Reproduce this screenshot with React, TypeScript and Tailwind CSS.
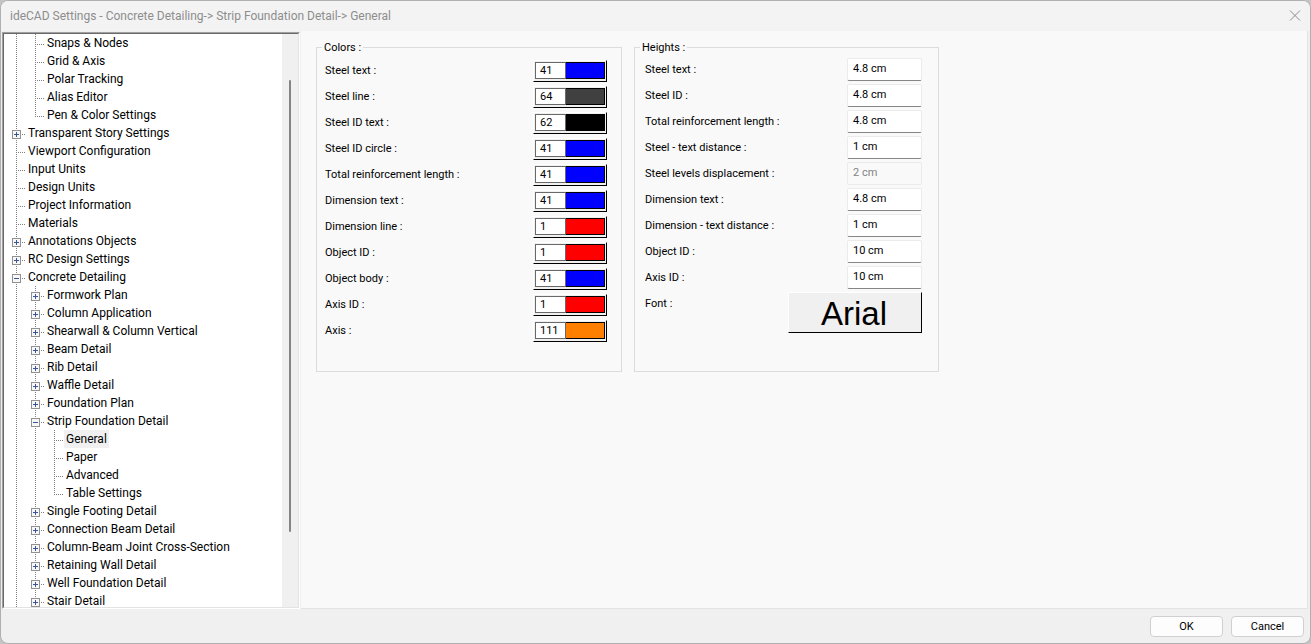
import React, { useState } from 'react';
import clsx from 'clsx';

type Toggle = 'plus' | 'minus' | null;

interface TreeNode {
  label: string;
  level: number;
  toggle?: Toggle;
  last?: boolean;
}

interface ColorRow {
  id: string;
  label: string;
  pen: number;
  swatch: string;
}

interface HeightRow {
  id: string;
  label: string;
  value: string;
  disabled?: boolean;
}

const treeNodes: TreeNode[] = [
  { label: 'Snaps & Nodes', level: 1 },
  { label: 'Grid & Axis', level: 1 },
  { label: 'Polar Tracking', level: 1 },
  { label: 'Alias Editor', level: 1 },
  { label: 'Pen & Color Settings', level: 1, last: true },
  { label: 'Transparent Story Settings', level: 0, toggle: 'plus' },
  { label: 'Viewport Configuration', level: 0 },
  { label: 'Input Units', level: 0 },
  { label: 'Design Units', level: 0 },
  { label: 'Project Information', level: 0 },
  { label: 'Materials', level: 0 },
  { label: 'Annotations Objects', level: 0, toggle: 'plus' },
  { label: 'RC Design Settings', level: 0, toggle: 'plus' },
  { label: 'Concrete Detailing', level: 0, toggle: 'minus' },
  { label: 'Formwork Plan', level: 1, toggle: 'plus' },
  { label: 'Column Application', level: 1, toggle: 'plus' },
  { label: 'Shearwall & Column Vertical', level: 1, toggle: 'plus' },
  { label: 'Beam Detail', level: 1, toggle: 'plus' },
  { label: 'Rib Detail', level: 1, toggle: 'plus' },
  { label: 'Waffle Detail', level: 1, toggle: 'plus' },
  { label: 'Foundation Plan', level: 1, toggle: 'plus' },
  { label: 'Strip Foundation Detail', level: 1, toggle: 'minus' },
  { label: 'General', level: 2 },
  { label: 'Paper', level: 2 },
  { label: 'Advanced', level: 2 },
  { label: 'Table Settings', level: 2, last: true },
  { label: 'Single Footing Detail', level: 1, toggle: 'plus' },
  { label: 'Connection Beam Detail', level: 1, toggle: 'plus' },
  { label: 'Column-Beam Joint Cross-Section', level: 1, toggle: 'plus' },
  { label: 'Retaining Wall Detail', level: 1, toggle: 'plus' },
  { label: 'Well Foundation Detail', level: 1, toggle: 'plus' },
  { label: 'Stair Detail', level: 1, toggle: 'plus' },
];

const colorRows: ColorRow[] = [
  { id: 'steel-text', label: 'Steel text :', pen: 41, swatch: 'bg-[#0000ff]' },
  { id: 'steel-line', label: 'Steel line :', pen: 64, swatch: 'bg-[#404040]' },
  { id: 'steel-id-text', label: 'Steel ID text :', pen: 62, swatch: 'bg-black' },
  { id: 'steel-id-circle', label: 'Steel ID circle :', pen: 41, swatch: 'bg-[#0000ff]' },
  { id: 'total-length', label: 'Total reinforcement length :', pen: 41, swatch: 'bg-[#0000ff]' },
  { id: 'dim-text', label: 'Dimension text :', pen: 41, swatch: 'bg-[#0000ff]' },
  { id: 'dim-line', label: 'Dimension line :', pen: 1, swatch: 'bg-[#ff0000]' },
  { id: 'object-id', label: 'Object ID :', pen: 1, swatch: 'bg-[#ff0000]' },
  { id: 'object-body', label: 'Object body :', pen: 41, swatch: 'bg-[#0000ff]' },
  { id: 'axis-id', label: 'Axis ID :', pen: 1, swatch: 'bg-[#ff0000]' },
  { id: 'axis', label: 'Axis :', pen: 111, swatch: 'bg-[#ff7f00]' },
];

const heightRows: HeightRow[] = [
  { id: 'steel-text', label: 'Steel text :', value: '4.8 cm' },
  { id: 'steel-id', label: 'Steel ID :', value: '4.8 cm' },
  { id: 'total-length', label: 'Total reinforcement length :', value: '4.8 cm' },
  { id: 'steel-distance', label: 'Steel - text distance :', value: '1 cm' },
  { id: 'levels', label: 'Steel levels displacement :', value: '2 cm', disabled: true },
  { id: 'dim-text', label: 'Dimension text :', value: '4.8 cm' },
  { id: 'dim-distance', label: 'Dimension - text distance :', value: '1 cm' },
  { id: 'object-id', label: 'Object ID :', value: '10 cm' },
  { id: 'axis-id', label: 'Axis ID :', value: '10 cm' },
];

// dotted connector for one indent column, with an optional +/- box
const Guide = ({ branch, last, toggle }: { branch: boolean; last?: boolean; toggle?: Toggle }) => (
  <svg width="19" height="18" viewBox="0 0 19 18" shapeRendering="crispEdges" className="shrink-0" aria-hidden="true">
    <path d={last ? 'M9.5 0V11' : 'M9.5 0V18'} stroke="#808080" strokeDasharray="1 1" />
    {branch && <path d="M9 10.5H18" stroke="#808080" strokeDasharray="1 1" />}
    {toggle && (
      <>
        <rect x="5" y="6" width="9" height="9" fill="#919191" />
        <rect x="6" y="7" width="7" height="7" fill="#f7f7f7" />
        <path d="M7 10.5H12" stroke="#39549b" />
        {toggle === 'plus' && <path d="M9.5 8V13" stroke="#39549b" />}
      </>
    )}
  </svg>
);

const TreeRow = ({ node, selected, onSelect }: { node: TreeNode; selected: boolean; onSelect: () => void }) => (
  <li className="flex h-[18px]">
    {Array.from({ length: node.level + 1 }, (_, i) => (
      <Guide
        key={i}
        branch={i === node.level}
        last={i === node.level && node.last}
        toggle={i === node.level ? node.toggle : null}
      />
    ))}
    <button
      type="button"
      onClick={onSelect}
      className={clsx('h-[18px] px-[2px] text-xs leading-[18px] whitespace-nowrap', selected && 'bg-[#f0f0f0]')}
    >
      {node.label}
    </button>
  </li>
);

const SettingsTree = () => {
  const [selected, setSelected] = useState('General');

  return (
    <nav className="ml-px mt-px flex w-[298px] shrink-0 border-t border-l border-r border-b border-t-[#a0a0a0] border-l-[#a0a0a0] border-r-white border-b-white">
      <div className="flex min-w-0 flex-1 border border-t-[#696969] border-l-[#696969] border-r-[#e3e3e3] border-b-[#e3e3e3] bg-white">
        <ul className="min-h-0 flex-1 overflow-hidden pl-[3px]">
          {treeNodes.map((node) => (
            <TreeRow
              key={node.label}
              node={node}
              selected={node.label === selected}
              onSelect={() => setSelected(node.label)}
            />
          ))}
        </ul>
        <div className="flex w-4 flex-col items-center bg-[#f0f0f0] pt-[46px] pb-[75px]">
          <div className="w-[2px] flex-1 rounded-full bg-[#858585]"></div>
        </div>
      </div>
    </nav>
  );
};

const ColorsGroup = () => (
  <fieldset className="w-[306px] border border-[#dcdcdc] pr-[14px] pb-[27px] pl-2">
    <legend className="-ml-[3px] px-[2px] leading-[15px]">Colors :</legend>
    <div className="pt-[3px]">
      {colorRows.map((row) => (
        <div key={row.id} className="flex h-[26px] items-center justify-between">
          <label htmlFor={`color-${row.id}`}>{row.label}</label>
          <button
            id={`color-${row.id}`}
            type="button"
            className="flex h-[22px] w-[74px] border border-t-white border-r-black border-b-black border-l-white bg-[#f0f0f0] px-px pt-px pb-[2px]"
          >
            <span className="h-[17px] w-[31px] border border-[#696969] bg-white pl-1 text-left leading-[15px]">
              {row.pen}
            </span>
            <span className={clsx('h-[17px] flex-1 border border-l-0 border-black', row.swatch)}></span>
          </button>
        </div>
      ))}
    </div>
  </fieldset>
);

const HeightsGroup = () => (
  <fieldset className="w-[305px] border border-[#dcdcdc] pr-4 pl-[10px]">
    <legend className="-ml-[5px] px-[2px] leading-[15px]">Heights :</legend>
    <div className="pt-[2px]">
      {heightRows.map((row) => (
        <div key={row.id} className="flex h-[26px] items-start justify-between pt-px">
          <label htmlFor={`height-${row.id}`} className="leading-[24px]">{row.label}</label>
          <input
            id={`height-${row.id}`}
            type="text"
            defaultValue={row.value}
            disabled={row.disabled}
            className={clsx(
              'h-[23px] w-[75px] rounded-[2px] border border-[#ebebeb] pb-[2px] pl-[5px] outline-none',
              row.disabled ? 'bg-[#f9f9f9] text-[#838383]' : 'border-b-[#868686] bg-white'
            )}
          />
        </div>
      ))}
      <div className="flex items-start justify-between pt-px">
        <label htmlFor="font" className="leading-[24px]">Font :</label>
        <button
          id="font"
          type="button"
          className="h-[41px] w-[134px] border border-t-white border-r-black border-b-black border-l-white bg-[#f0f0f0] pt-[2px] pr-[2px] font-['Liberation_Sans',Arial,sans-serif] text-[33px] leading-[37px]"
        >
          Arial
        </button>
      </div>
    </div>
  </fieldset>
);

const App = () => {
  return (
    <div className="h-screen bg-[#c4c4c4] font-['Roboto','Segoe_UI',sans-serif] text-black">
      <div className="flex h-full flex-col overflow-hidden rounded-lg border border-[#b0b0b0] bg-[#f0f0f0]">
        <header className="flex h-[30px] shrink-0 items-center justify-between bg-[#f3f3f3] pr-[9px] pl-[9px] text-xs text-[#8d8d8d]">
          <h1>ideCAD Settings - Concrete Detailing-&gt; Strip Foundation Detail-&gt; General</h1>
          <button type="button" aria-label="Close">
            <svg width="12" height="12" viewBox="0 0 12 12" fill="none" stroke="#8d8d8d">
              <path d="M1 0.5L11 10.5M11 0.5L1 10.5" />
            </svg>
          </button>
        </header>

        <div className="flex min-h-0 flex-1">
          <SettingsTree />
          <main className="mr-[2px] ml-px flex-1 border-r border-b border-[#e3e3e3] bg-[#f9f9f9] pt-[9px] pl-[15px] text-[11px]">
            <div className="flex gap-3">
              <ColorsGroup />
              <HeightsGroup />
            </div>
          </main>
        </div>

        <footer className="flex h-[34px] shrink-0 items-start justify-end gap-2 pt-[7px] pr-[6px] text-[11px]">
          <button type="button" className="h-[21px] w-[73px] rounded border border-[#d0d0d0] bg-[#fdfdfd] leading-[19px]">
            OK
          </button>
          <button type="button" className="h-[21px] w-[73px] rounded border border-[#d0d0d0] bg-[#fdfdfd] leading-[19px]">
            Cancel
          </button>
        </footer>
      </div>
    </div>
  );
};

export default App;
